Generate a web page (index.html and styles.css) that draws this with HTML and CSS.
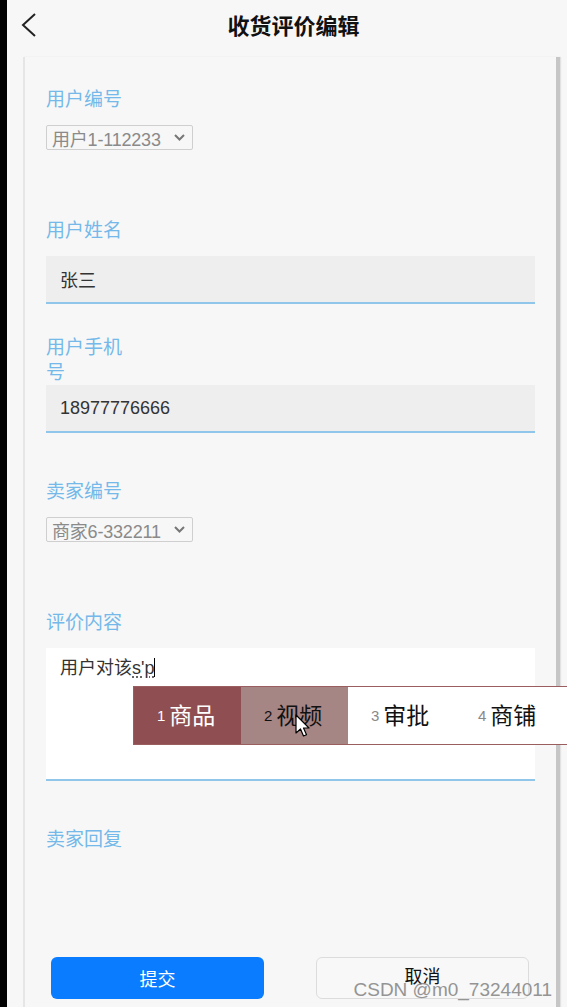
FILE: index.html
```html
<!DOCTYPE html>
<html lang="zh-CN">
<head>
  <meta charset="UTF-8">
  <title>收货评价编辑</title>
  <meta name="viewport" content="width=device-width, initial-scale=1.0">
  <link rel="stylesheet" href="styles.css">
</head>
<body>
  <!-- Top bar -->
  <div class="topbar">
    <span class="back">
      <svg width="18" height="26" viewBox="0 0 18 26"><path d="M15 2 L3 13 L15 24" fill="none" stroke="#222" stroke-width="2"/></svg>
    </span>
    <h1 class="title">收货评价编辑</h1>
    <span></span>
  </div>

  <div class="card">
    <!-- 用户编号 -->
    <div class="field field-select">
      <div class="label">用户编号</div>
      <div class="select">
        <span>用户1-112233</span>
        <svg width="11" height="7" viewBox="0 0 11 7"><path d="M1 1 L5.5 5.5 L10 1" fill="none" stroke="#777" stroke-width="2"/></svg>
      </div>
    </div>

    <!-- 用户姓名 -->
    <div class="field field-tight">
      <div class="label">用户姓名</div>
      <div class="input">张三</div>
    </div>

    <!-- 用户手机号 -->
    <div class="field">
      <div class="label label-wrap">用户手机号</div>
      <div class="input">18977776666</div>
    </div>

    <!-- 卖家编号 -->
    <div class="field field-select">
      <div class="label">卖家编号</div>
      <div class="select">
        <span>商家6-332211</span>
        <svg width="11" height="7" viewBox="0 0 11 7"><path d="M1 1 L5.5 5.5 L10 1" fill="none" stroke="#777" stroke-width="2"/></svg>
      </div>
    </div>

    <!-- 评价内容 -->
    <div class="field">
      <div class="label">评价内容</div>
      <div class="textarea">
        用户对该<span class="composing">s'p</span><span class="caret"></span>
        <!-- IME candidate bar -->
        <div class="ime">
          <div class="ime-item active"><small>1</small>商品</div>
          <div class="ime-item hover"><small>2</small>视频</div>
          <div class="ime-item"><small>3</small>审批</div>
          <div class="ime-item"><small>4</small>商铺</div>
          <svg class="pointer" width="16" height="24" viewBox="0 0 16 24"><path d="M1 1 L1 19 L5.5 15 L8.5 22 L11.5 20.8 L8.5 14 L14 14 Z" fill="#fff" stroke="#000" stroke-width="1.2" stroke-linejoin="round"/></svg>
        </div>
      </div>
    </div>

    <!-- 卖家回复 -->
    <div class="field field-last">
      <div class="label">卖家回复</div>
    </div>

    <div class="actions">
      <button class="btn btn-primary">提交</button>
      <button class="btn btn-default">取消</button>
    </div>
  </div>

  <div class="watermark">CSDN @m0_73244011</div>
</body>
</html>
```

FILE: styles.css
```css
/* Base */
* {
  box-sizing: border-box;
  margin: 0;
  padding: 0;
}
html, body {
  height: 1007px;
  overflow: hidden;
}
body {
  position: relative;
  font-family: "Liberation Sans", "Noto Sans CJK SC", sans-serif;
  background: #f7f7f7;
  border-left: 7px solid #000;
  color: #333;
}

/* Top bar */
.topbar {
  height: 57px;
  display: grid;
  grid-template-columns: 1fr auto 1fr;
  align-items: center;
  padding-left: 13px;
}
.back {
  display: flex;
  align-items: center;
  padding-bottom: 8px;
}
.title {
  font-size: 22px;
  font-weight: bold;
  color: #111;
  padding-bottom: 10px;
}

/* Card */
.card {
  margin-left: 16px;
  width: 537px;
  height: 950px;
  border-left: 2px solid #e6e6e6;
  border-right: 4px solid #c6c6c6;
  box-shadow: 1px 0 1px #e2e2e2;
  padding: 30px 21px 0;
}

/* Fields */
.field {
  margin-bottom: 46px;
}
.field-select {
  margin-bottom: 68px;
}
.field-tight {
  margin-bottom: 31px;
}
.field-last {
  margin-bottom: 104px;
}
.label {
  width: 80px;
  font-size: 19px;
  line-height: 26px;
  color: #74b9e9;
  margin-bottom: 12px;
}
.label-wrap {
  line-height: 25px;
  margin-bottom: 0;
}
.select {
  width: 147px;
  height: 25px;
  display: flex;
  align-items: center;
  justify-content: space-between;
  padding: 0 7px 0 5px;
  border: 1px solid #cfcfcf;
  border-radius: 2px;
  font-size: 18px;
  letter-spacing: -0.2px;
  color: #8a8a8a;
}
.input {
  height: 48px;
  background: #eeeeee;
  border-bottom: 2px solid #8fc6ea;
  padding-left: 14px;
  display: flex;
  align-items: center;
  font-size: 18px;
  color: #333;
}
.textarea {
  position: relative;
  height: 133px;
  background: #fff;
  border-bottom: 2px solid #8fc6ea;
  padding: 8px 14px;
  font-size: 18px;
  line-height: 24px;
  color: #333;
}
.composing {
  text-decoration: underline dotted #555;
  text-underline-offset: 3px;
}
.caret {
  display: inline-block;
  width: 1px;
  height: 19px;
  background: #000;
  vertical-align: -3px;
}

/* IME candidate bar */
.ime {
  position: absolute;
  left: 87px;
  top: 38px;
  width: 436px;
  height: 59px;
  display: flex;
  background: #fff;
  border: 1px solid #9a5e61;
}
.ime-item {
  width: 107px;
  padding-left: 23px;
  display: flex;
  align-items: center;
  font-size: 23px;
  color: #111;
}
.ime-item small {
  font-size: 15px;
  color: #888;
  margin-right: 4px;
}
.ime-item.active {
  background: #8f4f52;
  color: #fff;
}
.ime-item.active small {
  color: #fff;
}
.ime-item.hover {
  background: #a68585;
}
.ime-item.hover small {
  color: #111;
}
.pointer {
  position: absolute;
  left: 161px;
  top: 27px;
}

/* Buttons */
.actions {
  display: flex;
  justify-content: space-between;
  padding: 0 6px 0 5px;
}
.btn {
  width: 213px;
  height: 42px;
  font-family: inherit;
  font-size: 18px;
  border-radius: 6px;
}
.btn-primary {
  background: #0a7cff;
  color: #fff;
  border: none;
}
.btn-default {
  background: #f8f8f8;
  color: #111;
  border: 1px solid #dcdcdc;
  padding-bottom: 6px;
}

/* Watermark */
.watermark {
  position: absolute;
  right: 15px;
  top: 979px;
  font-size: 19px;
  color: #8a8a8a;
  opacity: 0.9;
}
```
